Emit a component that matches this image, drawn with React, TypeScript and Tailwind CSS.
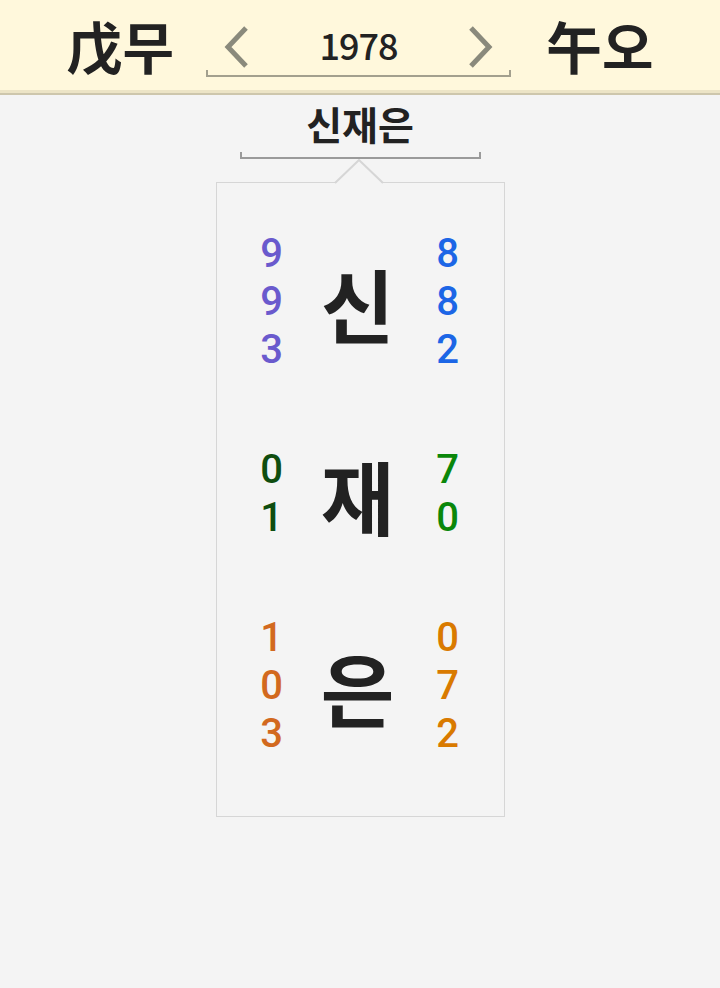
import React from 'react';

const FONT = { fontFamily: '"Noto Sans CJK KR", "Noto Sans", sans-serif' };
const DIGITS = { fontFamily: 'Roboto, "Noto Sans", sans-serif' };

type Row = { ch: string; left: string[]; right: string[]; lc: string; rc: string };

const rows: Row[] = [
  { ch: '신', left: ['9', '9', '3'], right: ['8', '8', '2'], lc: 'text-[#6a5acd]', rc: 'text-[#1c66e6]' },
  { ch: '재', left: ['0', '1'], right: ['7', '0'], lc: 'text-[#0f4d0f]', rc: 'text-[#0a870a]' },
  { ch: '은', left: ['1', '0', '3'], right: ['0', '7', '2'], lc: 'text-[#d2691e]', rc: 'text-[#d97a00]' },
];

const Chevron = ({ dir }: { dir: 'left' | 'right' }) => (
  <svg width="28" height="44" viewBox="0 0 28 44">
    <polyline
      points={dir === 'left' ? '24,3 6,22 24,41' : '4,3 22,22 4,41'}
      fill="none"
      stroke="#8a8a7c"
      strokeWidth="5"
    />
  </svg>
);

const Digits = ({ list, color }: { list: string[]; color: string }) => (
  <div className={`w-[40px] text-center text-[40px] font-medium leading-[48px] ${color}`} style={DIGITS}>
    {list.map((d, i) => (
      <div key={i}>{d}</div>
    ))}
  </div>
);

const App = () => {
  return (
    <div className="min-h-[988px] bg-[#f4f4f4] text-[#222]" style={FONT}>
      <header className="bg-[#fff8dc]">
        <div className="h-[90px] flex items-start justify-center">
          <div className="mt-[17px] text-[56px] font-bold leading-none">戊무</div>
          <div className="ml-[32px] w-[305px] pt-[24px] flex flex-col">
            <div className="h-[46px] flex items-center justify-between px-[16px]">
              <Chevron dir="left" />
              <span className="mb-[6px] text-[36px] leading-none tracking-[-1px] font-medium">1978</span>
              <Chevron dir="right" />
            </div>
            <div className="h-[7px] border-x-2 border-b-2 border-[#a3a08e]" />
          </div>
          <div className="ml-[35px] mt-[17px] text-[56px] font-bold leading-none">午오</div>
        </div>
        <div className="h-[3px] bg-[#ece4c6]" />
        <div className="h-[2px] bg-[#cdc6ac]" />
      </header>

      <div className="flex flex-col items-center">
        <div className="mt-[4px] text-[39px] font-bold leading-[48px]">신재은</div>
        <div className="mt-[5px] w-[241px] h-[7px] border-x-2 border-b-2 border-[#9a9a9a]" />

        <div className="relative mt-[23px] w-[289px] h-[635px] border border-[#d6d6d6] pt-[23px]">
          <svg
            className="absolute left-[117px] top-[-24px]"
            width="50"
            height="25"
            viewBox="0 0 50 25"
          >
            <polygon points="1,25 25,1 49,25" fill="#f4f4f4" />
            <polyline points="1,24 25,1 49,24" fill="none" stroke="#d6d6d6" strokeWidth="2" />
          </svg>
          {rows.map((r) => (
            <div key={r.ch} className="h-[192px] flex items-center pl-[35px]">
              <Digits list={r.left} color={r.lc} />
              <div className="ml-[18px] w-[96px] text-center text-[80px] font-bold leading-none">{r.ch}</div>
              <div className="ml-[22px]">
                <Digits list={r.right} color={r.rc} />
              </div>
            </div>
          ))}
        </div>
      </div>
    </div>
  );
};

export default App;
